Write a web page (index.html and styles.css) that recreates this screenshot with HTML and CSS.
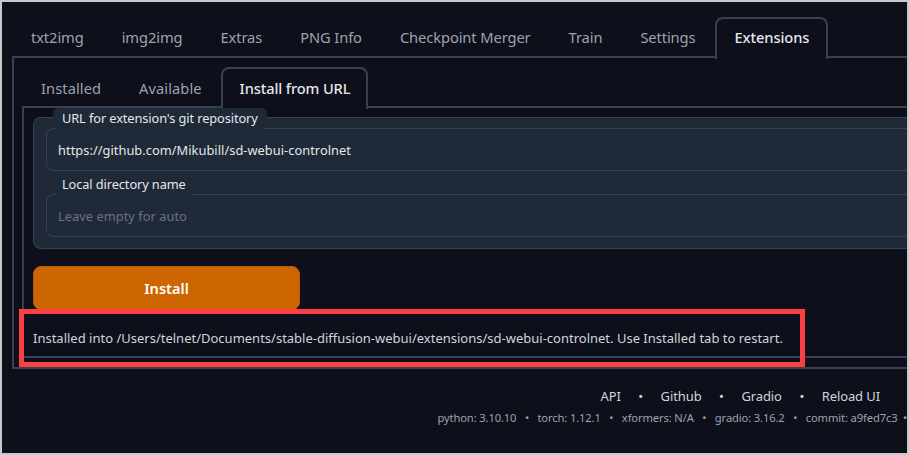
FILE: index.html
```html
<!DOCTYPE html>
<html lang="en">
<head>
<meta charset="utf-8">
<title>Extensions</title>
<link rel="stylesheet" href="styles.css">
</head>
<body>
<div class="frame">
  <main class="app">
    <nav class="tabs tabs-top">
      <span class="tab">txt2img</span>
      <span class="tab">img2img</span>
      <span class="tab">Extras</span>
      <span class="tab">PNG Info</span>
      <span class="tab">Checkpoint Merger</span>
      <span class="tab">Train</span>
      <span class="tab">Settings</span>
      <span class="tab active">Extensions</span>
    </nav>
    <section class="panel">
      <nav class="tabs tabs-inner">
        <span class="tab">Installed</span>
        <span class="tab">Available</span>
        <span class="tab active">Install from URL</span>
      </nav>
      <div class="inner">
        <form class="form">
          <div class="field">
            <label class="label">URL for extension's git repository</label>
            <div class="input">https://github.com/Mikubill/sd-webui-controlnet</div>
          </div>
          <div class="field field-second">
            <label class="label">Local directory name</label>
            <div class="input placeholder">Leave empty for auto</div>
          </div>
        </form>
        <button class="install" type="button">Install</button>
        <p class="result">Installed into /Users/telnet/Documents/stable-diffusion-webui/extensions/sd-webui-controlnet. Use Installed tab to restart.</p>
      </div>
      <div class="highlight"></div>
    </section>
    <footer class="footer">
      <div class="links">
        <span>API</span><i>•</i><span>Github</span><i>•</i><span>Gradio</span><i>•</i><span>Reload UI</span>
      </div>
      <div class="versions">
        <span>python: 3.10.10</span><i>•</i><span>torch: 1.12.1</span><i>•</i><span>xformers: N/A</span><i>•</i><span>gradio: 3.16.2</span><i>•</i><span>commit: a9fed7c3</span><i>•</i>
      </div>
    </footer>
  </main>
</div>
</body>
</html>
```

FILE: styles.css
```css
* { box-sizing: border-box; }
html, body { margin: 0; height: 100%; }
body {
  background: #c9c9c9;
  font-family: "Noto Sans", "Open Sans", sans-serif;
  overflow: hidden;
}
.frame { padding: 2px; height: 455px; }
.app {
  height: 451px;
  background: #0d0f1a;
  padding-top: 15px;
  padding-left: 10px;
  overflow: hidden;
}
.tabs { display: flex; font-size: 14.7px; color: #9ca3af; letter-spacing: -0.1px; }
.tabs-top { height: 41px; border-bottom: 2px solid #374151; }
.tabs-inner { height: 41px; border-bottom: 2px solid #374151; font-size: 14.6px; letter-spacing: 0.1px; }
.tab {
  padding: 0 17px;
  height: 41px;
  line-height: 36px;
  white-space: nowrap;
  border: 2px solid transparent;
  border-bottom: 0;
  border-radius: 8px 8px 0 0;
}
.tabs-inner .tab { line-height: 38px; }
.tabs .active {
  color: #e5e7eb;
  border-color: #374151;
  background: #0d0f1a;
  font-weight: 500;
  height: 42px;
  position: relative;
  letter-spacing: -0.1px;
}
.tabs-top .active { margin-left: 1px; }
.tabs-inner .active { padding-right: 16px; }
.panel {
  position: relative;
  margin-right: -10px;
  border-left: 2px solid #374151;
  border-bottom: 2px solid #374151;
  height: 311px;
  padding: 9px 0 0 8px;
}
.inner { border-left: 2px solid #374151; border-bottom: 2px solid #374151; height: 250px; padding: 9px 0 0 9px; }
.form {
  background: #1f2937;
  border: 1px solid #374151;
  border-right: 0;
  border-radius: 8px 0 0 8px;
  height: 132px;
  padding: 10px 0 0 12px;
  position: relative;
}
.field { position: relative; }
.field-second { margin-top: 23px; }
.label {
  position: absolute;
  left: 7px;
  top: -20px;
  height: 21px;
  line-height: 20px;
  padding: 0 9px;
  font-size: 12.8px;
  letter-spacing: -0.1px;
  color: #e5e7eb;
  background: #1f2937;
  border-radius: 6px;
  white-space: nowrap;
}
.input {
  height: 43px;
  line-height: 43px;
  padding-left: 11px;
  font-size: 12.8px;
  letter-spacing: 0.05px;
  color: #e5e7eb;
  background: #1f2937;
  border: 1px solid #374151;
  border-right: 0;
  border-radius: 8px 0 0 8px;
}
.input.placeholder { color: #6b7280; }
.install {
  display: block;
  margin-top: 17px;
  width: 267px;
  height: 44px;
  background: #cd6500;
  border: 1px solid #b95c04;
  border-radius: 8px;
  color: #fff;
  font: 600 14.6px "Noto Sans", "Open Sans", sans-serif;
}
.result {
  margin: 19px 0 0;
  font-size: 13px;
  line-height: 18px;
  color: #d1d5db;
  white-space: nowrap;
}
.highlight {
  position: absolute;
  left: 5px;
  top: 251px;
  width: 786px;
  height: 58px;
  border: 5px solid #fb3f45;
}
.footer { padding-top: 18px; }
.links, .versions { display: flex; justify-content: flex-end; white-space: nowrap; }
.links { font-size: 13px; color: #d1d5db; padding-right: 27px; line-height: 18px; letter-spacing: -0.1px; }
.links i { font-style: normal; padding: 0 17.5px; }
.versions { font-size: 11.2px; color: #9ca3af; margin-top: 5px; line-height: 15px; letter-spacing: -0.13px; }
.versions i { font-style: normal; padding: 0 8.5px; }
.versions i:last-child { padding: 0 0 0 5.5px; }
```
